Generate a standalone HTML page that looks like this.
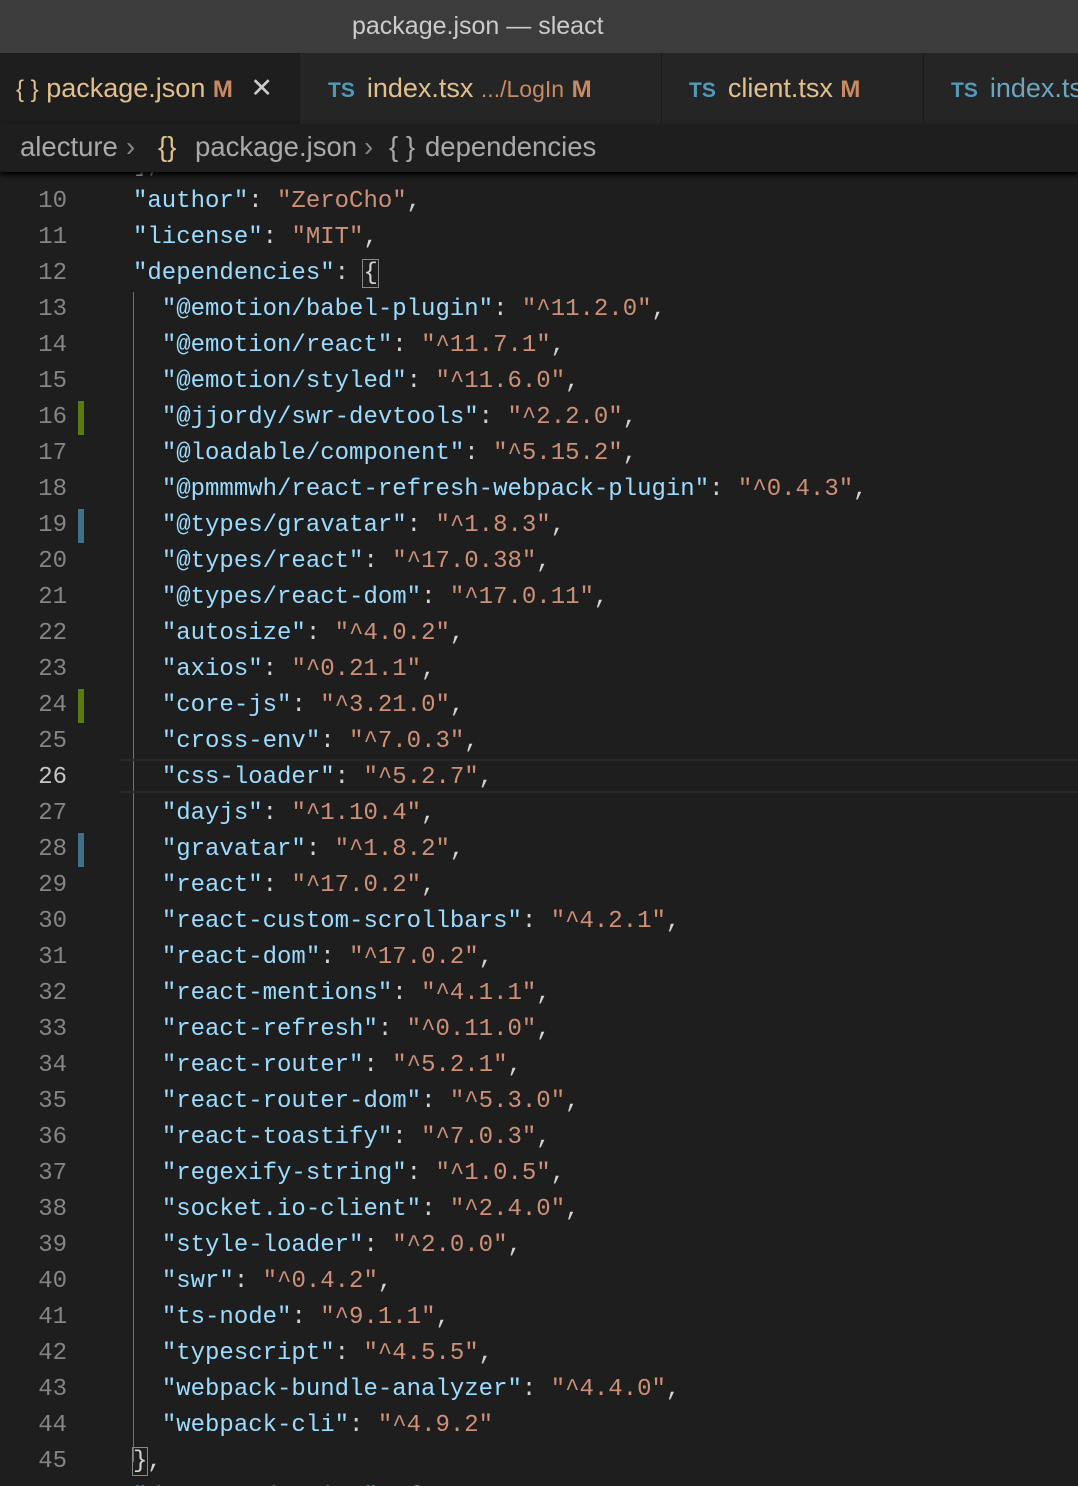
<!DOCTYPE html>
<html style="width:1078px;height:1486px;overflow:hidden"><head><meta charset="utf-8"><style>
*{margin:0;padding:0;box-sizing:border-box}
body{width:1078px;height:1486px;background:#1e1e1e;overflow:hidden;position:relative;font-family:"Liberation Sans",sans-serif}
.title{position:absolute;left:0;top:0;width:1078px;height:53px;background:#3c3c3c;color:#cccccc;font-size:25px;line-height:52px}
.tabs{position:absolute;left:0;top:53px;width:1078px;height:71px;background:#252526}
.tab{position:absolute;top:0;height:71px;line-height:71px;font-size:27px;white-space:nowrap;border-right:1px solid #1a1a1a;overflow:hidden}
.ts{color:#519aba;font-size:21px;font-weight:bold;margin-right:12px}
.y{color:#e2c08d}.m{color:#c98a62;font-size:24px;font-weight:bold}
.crumb{position:absolute;left:0;top:124px;width:1078px;height:48px;background:#1e1e1e;color:#a9a9a9;font-size:27.5px;line-height:46px;box-shadow:0 3px 5px #000;z-index:3;white-space:nowrap}
.crumb span{position:absolute;top:0}
.code{position:absolute;left:0;top:148px;width:1078px;font-family:"Liberation Mono",monospace;font-size:24px}
.ln{position:relative;height:36px;line-height:36px;white-space:pre;color:#d4d4d4}
.n{position:absolute;left:0;width:67px;text-align:right;color:#858585}
.t{position:absolute;left:133px}
.k{color:#9cdcfe}.s{color:#ce9178}
.bar{position:absolute;left:78px;width:6px;height:34px;top:1px}
</style></head><body>
<div class="title"><span style="position:absolute;left:352px">package.json — sleact</span></div>
<div class="tabs">
 <div class="tab" style="left:0;width:300px;background:#1e1e1e;padding-left:16px"><span style="color:#e2c08d;font-size:24px">{ }</span> <span class="y">package.json</span> <span class="m">M</span> <span style="color:#ccc;margin-left:10px">✕</span></div>
 <div class="tab" style="left:300px;width:362px;padding-left:28px"><span class="ts">TS</span><span class="y">index.tsx</span> <span style="color:#c98a62;font-size:23px">.../LogIn</span> <span class="m">M</span></div>
 <div class="tab" style="left:662px;width:262px;padding-left:27px"><span class="ts">TS</span><span class="y">client.tsx</span> <span class="m">M</span></div>
 <div class="tab" style="left:924px;width:160px;padding-left:27px"><span class="ts">TS</span><span style="color:#6ba6be">index.ts</span></div>
</div>
<div class="crumb"><span style="left:20px">alecture</span><span style="left:126px;color:#888">›</span><span style="left:158px;color:#e2c08d">{}</span><span style="left:195px">package.json</span><span style="left:364px;color:#888">›</span><span style="left:389px">{ }</span><span style="left:425px">dependencies</span></div>
<div style="position:absolute;left:133px;top:292px;width:1px;height:1170px;background:#707070"></div>
<div style="position:absolute;left:120px;top:759px;width:958px;height:34px;border-top:2px solid #282828;border-bottom:2px solid #282828"></div>
<div class="code">
<div class="ln"><span class="n">9</span><span class="t">],</span></div>
<div class="ln"><span class="n">10</span><span class="t"><span class="k">"author"</span>: <span class="s">"ZeroCho"</span>,</span></div>
<div class="ln"><span class="n">11</span><span class="t"><span class="k">"license"</span>: <span class="s">"MIT"</span>,</span></div>
<div class="ln"><span class="n">12</span><span class="t"><span class="k">"dependencies"</span>: <span style="outline:1px solid #888">{</span></span></div>
<div class="ln"><span class="n">13</span><span class="t">  <span class="k">"@emotion/babel-plugin"</span>: <span class="s">"^11.2.0"</span>,</span></div>
<div class="ln"><span class="n">14</span><span class="t">  <span class="k">"@emotion/react"</span>: <span class="s">"^11.7.1"</span>,</span></div>
<div class="ln"><span class="n">15</span><span class="t">  <span class="k">"@emotion/styled"</span>: <span class="s">"^11.6.0"</span>,</span></div>
<div class="ln"><span class="n">16</span><span class="bar" style="background:#587c0c"></span><span class="t">  <span class="k">"@jjordy/swr-devtools"</span>: <span class="s">"^2.2.0"</span>,</span></div>
<div class="ln"><span class="n">17</span><span class="t">  <span class="k">"@loadable/component"</span>: <span class="s">"^5.15.2"</span>,</span></div>
<div class="ln"><span class="n">18</span><span class="t">  <span class="k">"@pmmmwh/react-refresh-webpack-plugin"</span>: <span class="s">"^0.4.3"</span>,</span></div>
<div class="ln"><span class="n">19</span><span class="bar" style="background:#3f7086"></span><span class="t">  <span class="k">"@types/gravatar"</span>: <span class="s">"^1.8.3"</span>,</span></div>
<div class="ln"><span class="n">20</span><span class="t">  <span class="k">"@types/react"</span>: <span class="s">"^17.0.38"</span>,</span></div>
<div class="ln"><span class="n">21</span><span class="t">  <span class="k">"@types/react-dom"</span>: <span class="s">"^17.0.11"</span>,</span></div>
<div class="ln"><span class="n">22</span><span class="t">  <span class="k">"autosize"</span>: <span class="s">"^4.0.2"</span>,</span></div>
<div class="ln"><span class="n">23</span><span class="t">  <span class="k">"axios"</span>: <span class="s">"^0.21.1"</span>,</span></div>
<div class="ln"><span class="n">24</span><span class="bar" style="background:#587c0c"></span><span class="t">  <span class="k">"core-js"</span>: <span class="s">"^3.21.0"</span>,</span></div>
<div class="ln"><span class="n">25</span><span class="t">  <span class="k">"cross-env"</span>: <span class="s">"^7.0.3"</span>,</span></div>
<div class="ln"><span class="n" style="color:#c6c6c6">26</span><span class="t">  <span class="k">"css-loader"</span>: <span class="s">"^5.2.7"</span>,</span></div>
<div class="ln"><span class="n">27</span><span class="t">  <span class="k">"dayjs"</span>: <span class="s">"^1.10.4"</span>,</span></div>
<div class="ln"><span class="n">28</span><span class="bar" style="background:#3f7086"></span><span class="t">  <span class="k">"gravatar"</span>: <span class="s">"^1.8.2"</span>,</span></div>
<div class="ln"><span class="n">29</span><span class="t">  <span class="k">"react"</span>: <span class="s">"^17.0.2"</span>,</span></div>
<div class="ln"><span class="n">30</span><span class="t">  <span class="k">"react-custom-scrollbars"</span>: <span class="s">"^4.2.1"</span>,</span></div>
<div class="ln"><span class="n">31</span><span class="t">  <span class="k">"react-dom"</span>: <span class="s">"^17.0.2"</span>,</span></div>
<div class="ln"><span class="n">32</span><span class="t">  <span class="k">"react-mentions"</span>: <span class="s">"^4.1.1"</span>,</span></div>
<div class="ln"><span class="n">33</span><span class="t">  <span class="k">"react-refresh"</span>: <span class="s">"^0.11.0"</span>,</span></div>
<div class="ln"><span class="n">34</span><span class="t">  <span class="k">"react-router"</span>: <span class="s">"^5.2.1"</span>,</span></div>
<div class="ln"><span class="n">35</span><span class="t">  <span class="k">"react-router-dom"</span>: <span class="s">"^5.3.0"</span>,</span></div>
<div class="ln"><span class="n">36</span><span class="t">  <span class="k">"react-toastify"</span>: <span class="s">"^7.0.3"</span>,</span></div>
<div class="ln"><span class="n">37</span><span class="t">  <span class="k">"regexify-string"</span>: <span class="s">"^1.0.5"</span>,</span></div>
<div class="ln"><span class="n">38</span><span class="t">  <span class="k">"socket.io-client"</span>: <span class="s">"^2.4.0"</span>,</span></div>
<div class="ln"><span class="n">39</span><span class="t">  <span class="k">"style-loader"</span>: <span class="s">"^2.0.0"</span>,</span></div>
<div class="ln"><span class="n">40</span><span class="t">  <span class="k">"swr"</span>: <span class="s">"^0.4.2"</span>,</span></div>
<div class="ln"><span class="n">41</span><span class="t">  <span class="k">"ts-node"</span>: <span class="s">"^9.1.1"</span>,</span></div>
<div class="ln"><span class="n">42</span><span class="t">  <span class="k">"typescript"</span>: <span class="s">"^4.5.5"</span>,</span></div>
<div class="ln"><span class="n">43</span><span class="t">  <span class="k">"webpack-bundle-analyzer"</span>: <span class="s">"^4.4.0"</span>,</span></div>
<div class="ln"><span class="n">44</span><span class="t">  <span class="k">"webpack-cli"</span>: <span class="s">"^4.9.2"</span></span></div>
<div class="ln"><span class="n">45</span><span class="t"><span style="outline:1px solid #888">}</span>,</span></div>
<div class="ln"><span class="n">46</span><span class="t"><span class="k">"devDependencies"</span>: {</span></div>
</div>
</body></html>
